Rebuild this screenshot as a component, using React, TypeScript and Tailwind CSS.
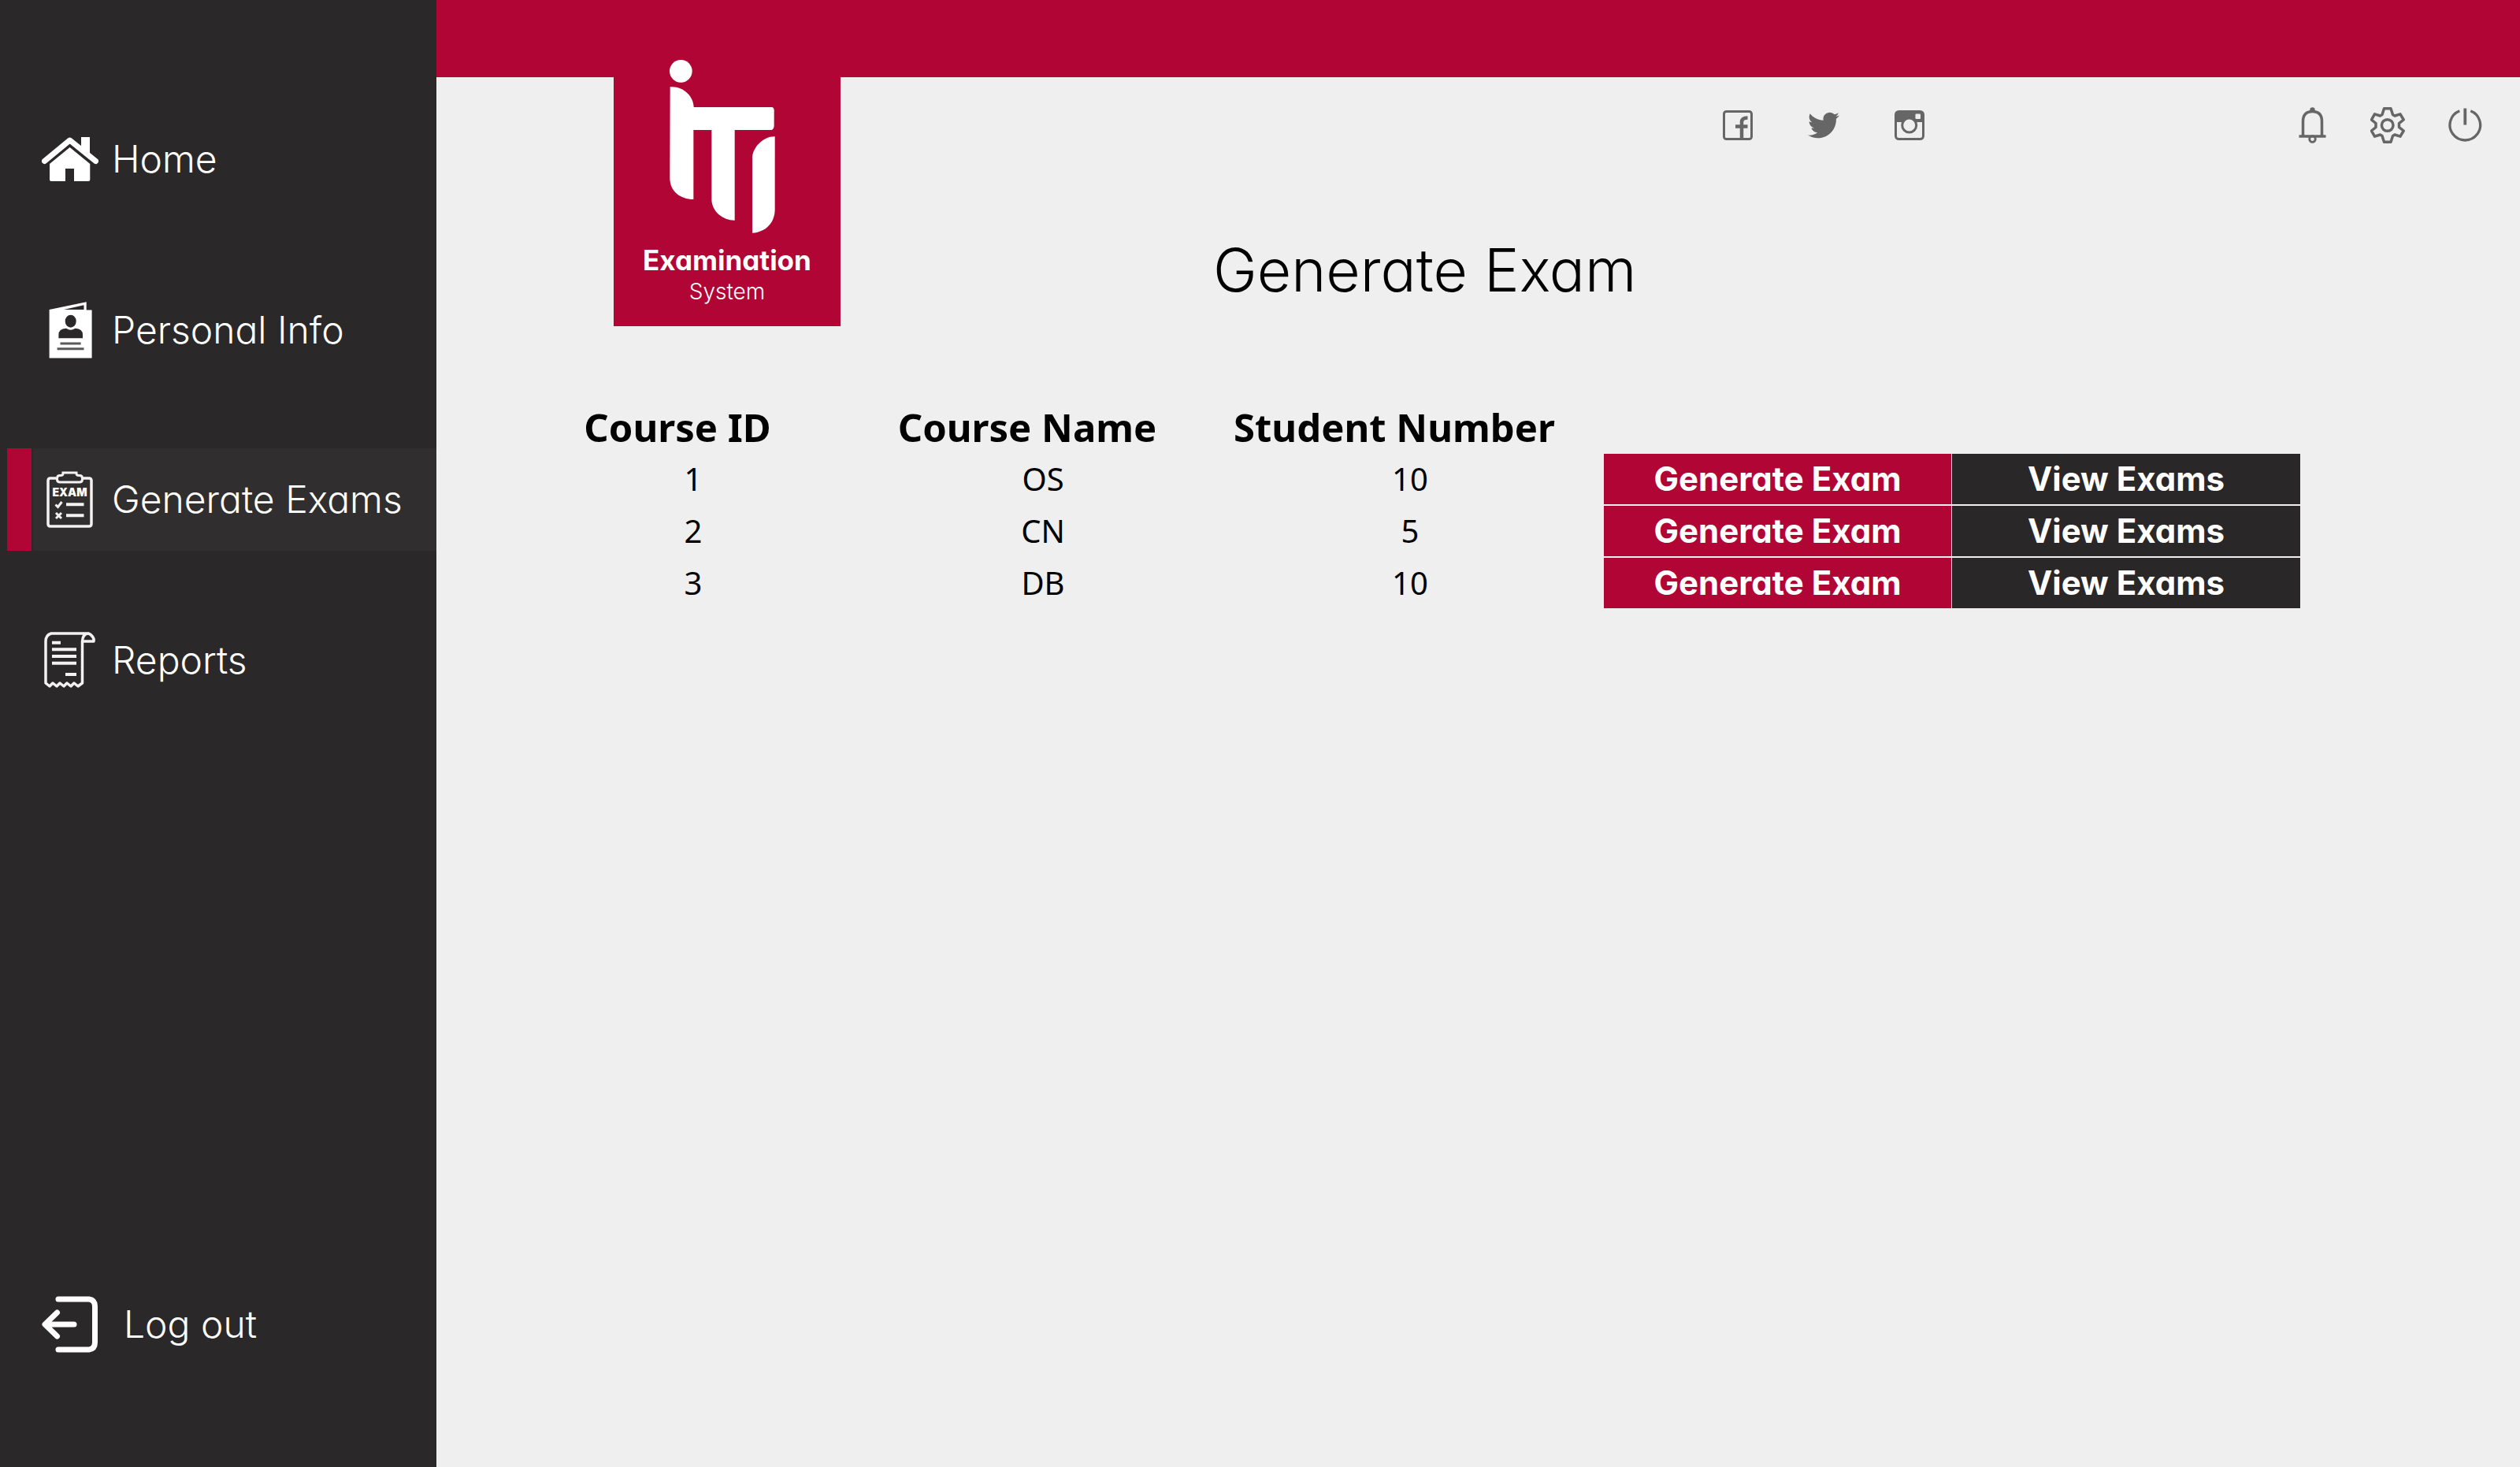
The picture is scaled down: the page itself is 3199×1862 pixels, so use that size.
import React from "react";
import { FaTwitter } from "react-icons/fa";

const HomeIcon = () => (
  <svg width="72" height="57" viewBox="0 0 72 57" fill="#fff" aria-hidden="true">
    <path d="M50 0H61V23L50 14Z" />
    <path d="M3.5 30.5L35.6 4L68.5 30.5" fill="none" stroke="#fff" strokeWidth="7" strokeLinecap="round" strokeLinejoin="round" />
    <path d="M35.6 13L61.3 34V54Q61.3 56 59.3 56H41V40H30V56H12Q10 56 10 54V34Z" />
  </svg>
);

const PersonalIcon = () => (
  <svg width="55" height="72" viewBox="0 0 55 72" aria-hidden="true">
    <path d="M0.6 10L47.7 0.3V10.5H54.6V71.5H0.6Z" fill="#fff" />
    <path d="M19 10L44.5 4.3V10Z" fill="#2a2829" />
    <ellipse cx="27.7" cy="24.7" rx="7" ry="8" fill="#2a2829" />
    <path d="M12.4 46.3V42Q12.4 34 22 33.7Q27.7 38 33.5 33.7Q43 34 43 42V46.3Z" fill="#2a2829" />
    <path d="M14.5 53H40.6M10.6 59.7H44.5" stroke="#5a595a" strokeWidth="3" />
  </svg>
);

const ExamIcon = () => (
  <svg width="60" height="73" viewBox="0 0 60 73" fill="none" stroke="#f2f2f2" strokeWidth="3.5" aria-hidden="true">
    <path d="M12 9H5Q2 9 2 12V67Q2 70 5 70H54Q57 70 57 67V12Q57 9 54 9H46" />
    <path d="M21 2V3Q21 5.500 18 5.500H17Q13.500 5.500 13.500 9V10.500Q13.500 14 17 14H42Q45.500 14 45.500 10.500V9Q45.500 5.500 42 5.500H41Q38 5.500 38 3V2Z" strokeWidth="3" />
    <text x="29.500" y="32" textAnchor="middle" fontSize="14" fontWeight="900" fontFamily="Inter, sans-serif" fill="#fff" stroke="none">EXAM</text>
    <path d="M11.500 42.500L14.500 45.500L19.500 39" strokeWidth="3" />
    <path d="M12 53L19 60M19 53L12 60" strokeWidth="3" />
    <path d="M25 42.300H47.500M25 56.300H47.500" strokeWidth="4" />
  </svg>
);

const ReportIcon = () => (
  <svg width="66" height="72" viewBox="0 0 66 72" fill="none" stroke="#f2f2f2" strokeWidth="3.5" strokeLinejoin="round" aria-hidden="true">
    <path d="M57 2H9Q2 4 2 12V65L7 69L11 65L16 69L20 65L25 69L29 65L34 69L38 65L43 69L48.500 65V12H63Q64 9 61 5.500Q58 2 55.500 2Q49 3 48.500 12" />
    <path d="M10 13.700H21M10 22.300H41M10 31H41M10 39.700H41M27 54H41" strokeWidth="4" />
  </svg>
);

const LogoutIcon = () => (
  <svg width="72" height="72" viewBox="0 0 72 72" fill="none" stroke="#fff" strokeWidth="7" strokeLinecap="round" strokeLinejoin="round" aria-hidden="true">
    <path d="M21 4H60Q67.500 5 67.500 13V59Q67.500 67 60 68H21" />
    <path d="M19.500 21L4 36L19.500 51M6 36H41" />
  </svg>
);

const LogoMark = () => (
  <svg width="134" height="220" viewBox="0 0 402 660" fill="#fff" className="ml-[71px] self-start" role="img" aria-label="ITI">
    <circle cx="43" cy="43" r="43" />
    <path d="M2 103C50 98 92 138 92 180H390Q400 182 398 200V250Q398 264 388 267H248V611C200 611 160 575 160 530V267H91V531C40 531 1 500 1 450Z" />
    <path d="M401 292V570C401 620 365 657 315 659V370C318 330 360 290 401 292Z" />
  </svg>
);

const FacebookIcon = () => (
  <svg width="38" height="38" viewBox="0 0 38 38" fill="none" stroke="#666" aria-hidden="true">
    <rect x="1.500" y="1.500" width="35" height="35" rx="3" strokeWidth="3" />
    <path d="M24 37V15Q24 9.500 31.500 9.500M16 20.500H31.500" strokeWidth="4.500" />
  </svg>
);

const InstagramIcon = () => (
  <svg width="38" height="38" viewBox="0 0 38 38" fill="none" stroke="#666" strokeWidth="3" aria-hidden="true">
    <path d="M1 15V5Q1 1 5 1H33Q37 1 37 5V15Z" fill="#666" stroke="none" />
    <rect x="1.500" y="1.500" width="35" height="35" rx="4" />
    <circle cx="18.700" cy="19" r="9" fill="#efefef" />
    <rect x="26.500" y="4.500" width="6.500" height="6.500" rx="1" fill="#efefef" stroke="none" />
  </svg>
);

const BellIcon = () => (
  <svg width="36" height="46" viewBox="0 0 36 46" fill="none" stroke="#666" strokeWidth="3.500" aria-hidden="true">
    <path d="M5.500 37V18Q5.500 5.500 17.500 5.500Q29.500 5.500 29.500 18V37" />
    <path d="M0.500 37H34.500" />
    <circle cx="17.500" cy="3.500" r="3.200" fill="#666" stroke="none" />
    <circle cx="17.500" cy="40.500" r="3.800" strokeWidth="2.800" />
  </svg>
);

const GearIcon = () => (
  <svg width="44" height="46" viewBox="0 0 44 46" fill="none" stroke="#666" strokeWidth="3.500" strokeLinejoin="round" aria-hidden="true">
    <path d="M17.500 1.800H26L28.500 9.500L31 11L38 8.800L42.200 16L36.500 20.500V25.500L42.200 30L38 37.200L31 35L28.500 36.500L26 44.200H17.500L15 36.500L12.500 35L5.500 37.200L1.500 30L7 25.500V20.500L1.500 16L5.500 8.800L12.500 11L15 9.500Z" />
    <circle cx="21.700" cy="23" r="7.300" />
  </svg>
);

const PowerIcon = () => (
  <svg width="43" height="44" viewBox="0 0 43 44" fill="none" stroke="#666" strokeWidth="3.300" aria-hidden="true">
    <path d="M14.300 3.700A19.300 19.300 0 1 0 28.300 3.700" />
    <path d="M21.300 0.500V21.500" strokeWidth="3.800" />
  </svg>
);

const navText = "text-[48px] leading-[56px] font-light whitespace-nowrap";

function NavItem({ icon, label, active = false, className = "" }: { icon: React.ReactNode; label: string; active?: boolean; className?: string }) {
  return (
    <a
      href="#"
      aria-current={active ? "page" : undefined}
      className={`flex h-[130px] items-center ${className}`}
    >
      <span className={active ? "ml-[9px] mr-[2px] h-full w-[31px] bg-[#b10635]" : "mr-[2px] w-[40px]"} />
      <span className={`flex h-full flex-1 items-center ${active ? "bg-[#302e2f]" : ""}`}>
        <span className="mr-[17px] ml-[11px] flex w-[72px] justify-center">{icon}</span>
        <span className={navText}>{label}</span>
      </span>
    </a>
  );
}

const courses = [
  { id: 1, name: "OS", students: 10 },
  { id: 2, name: "CN", students: 5 },
  { id: 3, name: "DB", students: 10 },
];

export default function App() {
  return (
    <div className="flex min-h-screen bg-[#efefef] font-['Inter',sans-serif] [font-feature-settings:'cv11']">
      <aside className="flex w-[554px] shrink-0 flex-col bg-[#2a2829] pt-[137px] pb-[116px] text-white">
        <nav className="flex flex-col">
          <NavItem icon={<HomeIcon />} label="Home" className="mb-[87px]" />
          <NavItem icon={<PersonalIcon />} label="Personal Info" className="mb-[85px]" />
          <NavItem icon={<ExamIcon />} label="Generate Exams" active className="mb-[74px]" />
          <NavItem icon={<ReportIcon />} label="Reports" />
        </nav>
        <button type="button" className="mt-auto flex h-[130px] items-center gap-[32px] pl-[53px] text-left">
          <LogoutIcon />
          <span className={navText}>Log out</span>
        </button>
      </aside>

      <main className="flex-1">
        <div className="h-[98px] bg-[#b10635]" />
        <header className="flex items-start">
          <div className="-mt-[22px] ml-[225px] flex h-[338px] w-[288px] shrink-0 flex-col items-center bg-[#b10635] text-white">
            <LogoMark />
            <span className="mt-[12px] text-[35px] leading-[44px] font-bold">Examination</span>
            <span className="text-[28px] leading-[36px] font-light">System</span>
          </div>
          <div className="flex flex-1 flex-col pt-[38px] pr-[48px] pl-[473px] text-black">
            <div className="flex items-center justify-end gap-[475px]">
              <div className="flex items-center gap-[70px]">
                <a href="#" aria-label="Facebook"><FacebookIcon /></a>
                <a href="#" aria-label="Twitter"><FaTwitter size={40} color="#666" /></a>
                <a href="#" aria-label="Instagram"><InstagramIcon /></a>
              </div>
              <div className="flex items-center gap-[55px]">
                <button type="button" aria-label="Notifications"><BellIcon /></button>
                <button type="button" aria-label="Settings"><GearIcon /></button>
                <button type="button" aria-label="Power"><PowerIcon /></button>
              </div>
            </div>
            <h1 className="mt-[119px] text-[75px] leading-[84px] font-light">Generate Exam</h1>
          </div>
        </header>

        <div className="mt-[95px] mr-[279px] ml-[102px]">
          <table className="w-full table-fixed border-collapse font-['Noto_Sans',sans-serif] text-black">
            <colgroup>
              <col className="w-[448px]" />
              <col className="w-[440px]" />
              <col className="w-[492px]" />
              <col className="w-[442px]" />
              <col className="w-[442px]" />
            </colgroup>
            <thead>
              <tr className="h-[66px] text-[49px] leading-[60px]">
                <th scope="col" className="p-0 pr-[40px] font-bold">Course ID</th>
                <th scope="col" className="p-0 pr-[40px] font-bold">Course Name</th>
                <th scope="col" className="p-0 pr-[40px] font-bold">Student Number</th>
                <td />
                <td />
              </tr>
            </thead>
            <tbody>
              {courses.map((c) => (
                <tr key={c.id} className="h-[66px] text-center text-[40px] leading-[60px]">
                  <td className="p-0">{c.id}</td>
                  <td className="p-0">{c.name}</td>
                  <td className="p-0">{c.students}</td>
                  <td className="p-0 pr-px">
                    <button type="button" className="block h-16 w-full bg-[#b10635] font-['Inter',sans-serif] text-[42px] font-bold text-white">
                      Generate Exam
                    </button>
                  </td>
                  <td className="p-0">
                    <button type="button" className="block h-16 w-full bg-[#292728] font-['Inter',sans-serif] text-[42px] font-bold text-white">
                      View Exams
                    </button>
                  </td>
                </tr>
              ))}
            </tbody>
          </table>
        </div>
      </main>
    </div>
  );
}
